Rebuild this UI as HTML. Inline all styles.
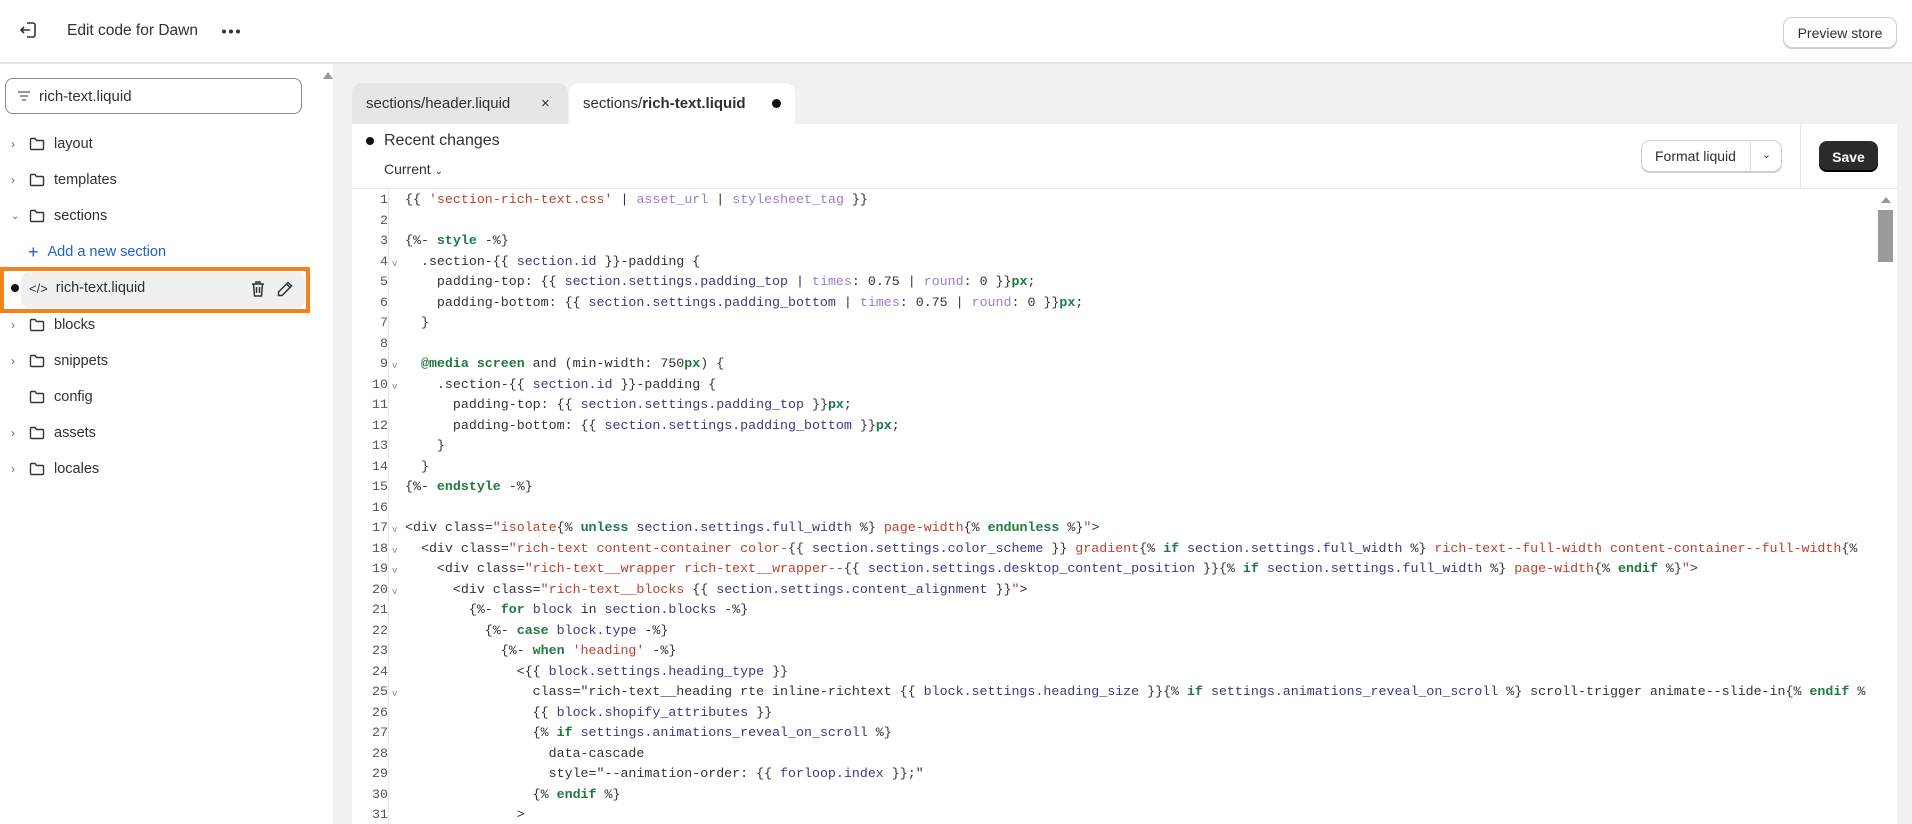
<!DOCTYPE html>
<html><head><meta charset="utf-8"><style>
*{box-sizing:border-box;margin:0;padding:0}
body{width:1912px;height:824px;overflow:hidden;background:#f1f1f1;font-family:"Liberation Sans",sans-serif;color:#303030;position:relative}
.hdr{position:absolute;left:0;top:0;width:1912px;height:64px;background:#fff;border-bottom:2px solid #e3e3e3}
.side{position:absolute;left:0;top:64px;width:333px;height:760px;background:#fff}
.btn{position:absolute;background:#fff;border:1px solid #d0d0d0;border-radius:9px;box-shadow:0 1px 0 #ccc;font-size:14px;display:flex;align-items:center;justify-content:center}
.row{position:absolute;left:0;height:30px;display:flex;align-items:center;font-size:14.5px;color:#303030}
.row .chev{width:14px;margin-left:11px;color:#666;font-size:12px}
.row svg{margin-left:4px;margin-right:9px}
.panel{position:absolute;left:352px;top:124px;width:1545px;height:700px;background:#fff}
.code{position:absolute;left:352px;top:190px;width:1538px;height:634px;overflow:hidden;font-family:"Liberation Mono",monospace;font-size:13.3px;line-height:20.5px;color:#2d2d6a}
.gut{position:absolute;left:0;top:0;width:36px;text-align:right;color:#555;white-space:normal}
.gut div{position:relative;height:20.5px}
.gut i{position:absolute;left:40px;top:2px;font-style:normal;font-size:9px;color:#888}
.txt{position:absolute;left:53px;top:0;color:#333;white-space:pre}
.s{color:#b8432e}.f{color:#9b7cd0}.k{color:#1e7a40;font-weight:bold}.v{color:#3a3a80}
</style></head><body>
<div class="hdr">
<svg style="position:absolute;left:18px;top:20px" width="20" height="20" viewBox="0 0 20 20" fill="none" stroke="#333" stroke-width="1.6"><path d="M9 3h6a2 2 0 0 1 2 2v10a2 2 0 0 1-2 2H9"/><path d="M12 10H3M6 7l-3 3 3 3"/></svg>
<div style="position:absolute;left:67px;top:22px;font-size:15.5px;color:#303030">Edit code for Dawn</div>
<svg style="position:absolute;left:221px;top:29px" width="20" height="5" viewBox="0 0 20 5" fill="#333"><circle cx="3" cy="2.5" r="2"/><circle cx="10" cy="2.5" r="2"/><circle cx="17" cy="2.5" r="2"/></svg>
<div class="btn" style="left:1783px;top:17px;width:114px;height:31px">Preview store</div>
</div>
<div class="side">
<div style="position:absolute;left:323px;top:8px;width:0;height:0;border-left:5px solid transparent;border-right:5px solid transparent;border-bottom:7px solid #999"></div>
<div style="position:absolute;left:5px;top:14px;width:297px;height:36px;border:1px solid #8a8a8a;border-radius:8px;display:flex;align-items:center;font-size:15px">
<svg style="margin:0 8px 0 11px" width="14" height="12" viewBox="0 0 14 12" stroke="#777" stroke-width="1.4"><path d="M1 2h12M3 6h8M5 10h4"/></svg>rich-text.liquid</div>
</div>
<div style="position:absolute;left:0;top:267px;width:310px;height:46px;border:4px solid #f5821f"></div>
<div style="position:absolute;left:21px;top:272px;width:284px;height:36px;background:#f0f0f0;border-radius:8px"></div>
<div class="row" style="top:273px;left:0">
<span style="width:8px;height:8px;border-radius:50%;background:#111;margin-left:11px"></span>
<span style="margin-left:10px;font-size:13px;color:#333">&lt;/&gt;</span><span style="margin-left:8px">rich-text.liquid</span></div>
<svg style="position:absolute;left:250px;top:280px" width="16" height="18" viewBox="0 0 16 18" fill="none" stroke="#333" stroke-width="1.5"><path d="M2 4h12M6 4V2h4v2M3.5 4l1 12h7l1-12M6.5 7v6M9.5 7v6"/></svg>
<svg style="position:absolute;left:276px;top:280px" width="18" height="18" viewBox="0 0 18 18" fill="none" stroke="#333" stroke-width="1.5"><path d="M12 2.5l3.5 3.5L6 15.5H2.5V12z M10.5 4l3.5 3.5"/></svg>
<div class="panel"></div>
<div style="position:absolute;left:352px;top:83px;width:216px;height:41px;background:#e6e6e6;border-radius:10px 10px 0 0;font-size:15px;display:flex;align-items:center;padding-left:14px">sections/header.liquid<span style="position:absolute;left:189px;font-size:15px">×</span></div>
<div style="position:absolute;left:569px;top:83px;width:226px;height:41px;background:#fff;border-radius:10px 10px 0 0;font-size:15px;display:flex;align-items:center;padding-left:14px">sections/<b style="font-weight:600">rich-text.liquid</b><span style="position:absolute;left:203px;top:16px;width:9px;height:9px;border-radius:50%;background:#111"></span></div>
<div style="position:absolute;left:366px;top:137px;width:8px;height:8px;border-radius:50%;background:#111"></div>
<div style="position:absolute;left:384px;top:132px;font-size:16px;color:#303030">Recent changes</div>
<div style="position:absolute;left:384px;top:161px;font-size:14px">Current <span style="font-size:10px">&#8964;</span></div>
<div class="btn" style="left:1641px;top:140px;width:141px;height:32px;justify-content:flex-start;padding-left:13px">Format liquid<span style="position:absolute;left:108px;top:0;height:30px;border-left:1px solid #ddd;width:32px;text-align:center;line-height:28px;font-size:11px">&#8964;</span></div>
<div style="position:absolute;left:1800px;top:124px;width:1px;height:64px;background:#e5e5e5"></div>
<div style="position:absolute;left:1819px;top:141px;width:59px;height:31px;background:#2b2b2b;border-radius:8px;color:#fff;font-size:14px;font-weight:bold;display:flex;align-items:center;justify-content:center;box-shadow:inset 0 -2px 0 #000">Save</div>
<div style="position:absolute;left:352px;top:188px;width:1545px;height:1px;background:#e5e5e5"></div>
<div style="position:absolute;left:388px;top:189px;width:1px;height:635px;background:#e8e8e8"></div>
<div style="position:absolute;left:1881px;top:197px;width:0;height:0;border-left:5px solid transparent;border-right:5px solid transparent;border-bottom:6px solid #999"></div>
<div style="position:absolute;left:1878px;top:210px;width:15px;height:52px;background:#9a9a9a"></div>
<div class="code">
<div class="gut"><div>1</div><div>2</div><div>3</div><div>4<i>v</i></div><div>5</div><div>6</div><div>7</div><div>8</div><div>9<i>v</i></div><div>10<i>v</i></div><div>11</div><div>12</div><div>13</div><div>14</div><div>15</div><div>16</div><div>17<i>v</i></div><div>18<i>v</i></div><div>19<i>v</i></div><div>20<i>v</i></div><div>21</div><div>22</div><div>23</div><div>24</div><div>25<i>v</i></div><div>26</div><div>27</div><div>28</div><div>29</div><div>30</div><div>31</div></div>
<div class="txt">{{ <span class="s">'section-rich-text.css'</span> | <span class="f">asset_url</span> | <span class="f">stylesheet_tag</span> }}

{%- <span class="k">style</span> -%}
  .section-{{ <span class="v">section.id</span> }}-padding {
    padding-top: {{ <span class="v">section.settings.padding_top</span> | <span class="f">times</span>: 0.75 | <span class="f">round</span>: 0 }}<span class="k">px</span>;
    padding-bottom: {{ <span class="v">section.settings.padding_bottom</span> | <span class="f">times</span>: 0.75 | <span class="f">round</span>: 0 }}<span class="k">px</span>;
  }

  <span class="k">@media screen</span> and (min-width: 750<span class="k">px</span>) {
    .section-{{ <span class="v">section.id</span> }}-padding {
      padding-top: {{ <span class="v">section.settings.padding_top</span> }}<span class="k">px</span>;
      padding-bottom: {{ <span class="v">section.settings.padding_bottom</span> }}<span class="k">px</span>;
    }
  }
{%- <span class="k">endstyle</span> -%}

&lt;div class=<span class="s">"isolate</span>{% <span class="k">unless</span> <span class="v">section.settings.full_width</span> %} <span class="s">page-width</span>{% <span class="k">endunless</span> %}<span class="s">"</span>&gt;
  &lt;div class=<span class="s">"rich-text content-container color-</span>{{ <span class="v">section.settings.color_scheme</span> }} <span class="s">gradient</span>{% <span class="k">if</span> <span class="v">section.settings.full_width</span> %} <span class="s">rich-text--full-width content-container--full-width</span>{%
    &lt;div class=<span class="s">"rich-text__wrapper rich-text__wrapper--</span>{{ <span class="v">section.settings.desktop_content_position</span> }}{% <span class="k">if</span> <span class="v">section.settings.full_width</span> %} <span class="s">page-width</span>{% <span class="k">endif</span> %}<span class="s">"</span>&gt;
      &lt;div class=<span class="s">"rich-text__blocks </span>{{ <span class="v">section.settings.content_alignment</span> }}<span class="s">"</span>&gt;
        {%- <span class="k">for</span> <span class="v">block</span> in <span class="v">section.blocks</span> -%}
          {%- <span class="k">case</span> <span class="v">block.type</span> -%}
            {%- <span class="k">when</span> <span class="s">'heading'</span> -%}
              &lt;{{ <span class="v">block.settings.heading_type</span> }}
                class="rich-text__heading rte inline-richtext {{ <span class="v">block.settings.heading_size</span> }}{% <span class="k">if</span> <span class="v">settings.animations_reveal_on_scroll</span> %} scroll-trigger animate--slide-in{% <span class="k">endif</span> %
                {{ <span class="v">block.shopify_attributes</span> }}
                {% <span class="k">if</span> <span class="v">settings.animations_reveal_on_scroll</span> %}
                  data-cascade
                  style="--animation-order: {{ <span class="v">forloop.index</span> }};"
                {% <span class="k">endif</span> %}
              &gt;</div>
</div>
<div class="row" style="top:129px"><span class="chev">&#x203A;</span><svg width="16" height="14" viewBox="0 0 16 14" fill="none" stroke="#333" stroke-width="1.4"><path d="M1.5 2.5a1 1 0 0 1 1-1h3.5l1.5 2h6a1 1 0 0 1 1 1v7a1 1 0 0 1-1 1h-11a1 1 0 0 1-1-1z"/></svg>layout</div>
<div class="row" style="top:165px"><span class="chev">&#x203A;</span><svg width="16" height="14" viewBox="0 0 16 14" fill="none" stroke="#333" stroke-width="1.4"><path d="M1.5 2.5a1 1 0 0 1 1-1h3.5l1.5 2h6a1 1 0 0 1 1 1v7a1 1 0 0 1-1 1h-11a1 1 0 0 1-1-1z"/></svg>templates</div>
<div class="row" style="top:201px"><span class="chev" style="font-size:10px">&#8964;</span><svg width="16" height="14" viewBox="0 0 16 14" fill="none" stroke="#333" stroke-width="1.4"><path d="M1.5 2.5a1 1 0 0 1 1-1h3.5l1.5 2h6a1 1 0 0 1 1 1v7a1 1 0 0 1-1 1h-11a1 1 0 0 1-1-1z"/></svg>sections</div>
<div class="row" style="top:237px;color:#1e5fcf;left:28px"><span style="font-size:18px;margin-right:9px">+</span>Add a new section</div>
<div class="row" style="top:310px"><span class="chev">&#x203A;</span><svg width="16" height="14" viewBox="0 0 16 14" fill="none" stroke="#333" stroke-width="1.4"><path d="M1.5 2.5a1 1 0 0 1 1-1h3.5l1.5 2h6a1 1 0 0 1 1 1v7a1 1 0 0 1-1 1h-11a1 1 0 0 1-1-1z"/></svg>blocks</div>
<div class="row" style="top:346px"><span class="chev">&#x203A;</span><svg width="16" height="14" viewBox="0 0 16 14" fill="none" stroke="#333" stroke-width="1.4"><path d="M1.5 2.5a1 1 0 0 1 1-1h3.5l1.5 2h6a1 1 0 0 1 1 1v7a1 1 0 0 1-1 1h-11a1 1 0 0 1-1-1z"/></svg>snippets</div>
<div class="row" style="top:382px"><span class="chev"></span><svg width="16" height="14" viewBox="0 0 16 14" fill="none" stroke="#333" stroke-width="1.4"><path d="M1.5 2.5a1 1 0 0 1 1-1h3.5l1.5 2h6a1 1 0 0 1 1 1v7a1 1 0 0 1-1 1h-11a1 1 0 0 1-1-1z"/></svg>config</div>
<div class="row" style="top:418px"><span class="chev">&#x203A;</span><svg width="16" height="14" viewBox="0 0 16 14" fill="none" stroke="#333" stroke-width="1.4"><path d="M1.5 2.5a1 1 0 0 1 1-1h3.5l1.5 2h6a1 1 0 0 1 1 1v7a1 1 0 0 1-1 1h-11a1 1 0 0 1-1-1z"/></svg>assets</div>
<div class="row" style="top:454px"><span class="chev">&#x203A;</span><svg width="16" height="14" viewBox="0 0 16 14" fill="none" stroke="#333" stroke-width="1.4"><path d="M1.5 2.5a1 1 0 0 1 1-1h3.5l1.5 2h6a1 1 0 0 1 1 1v7a1 1 0 0 1-1 1h-11a1 1 0 0 1-1-1z"/></svg>locales</div>
</body></html>
